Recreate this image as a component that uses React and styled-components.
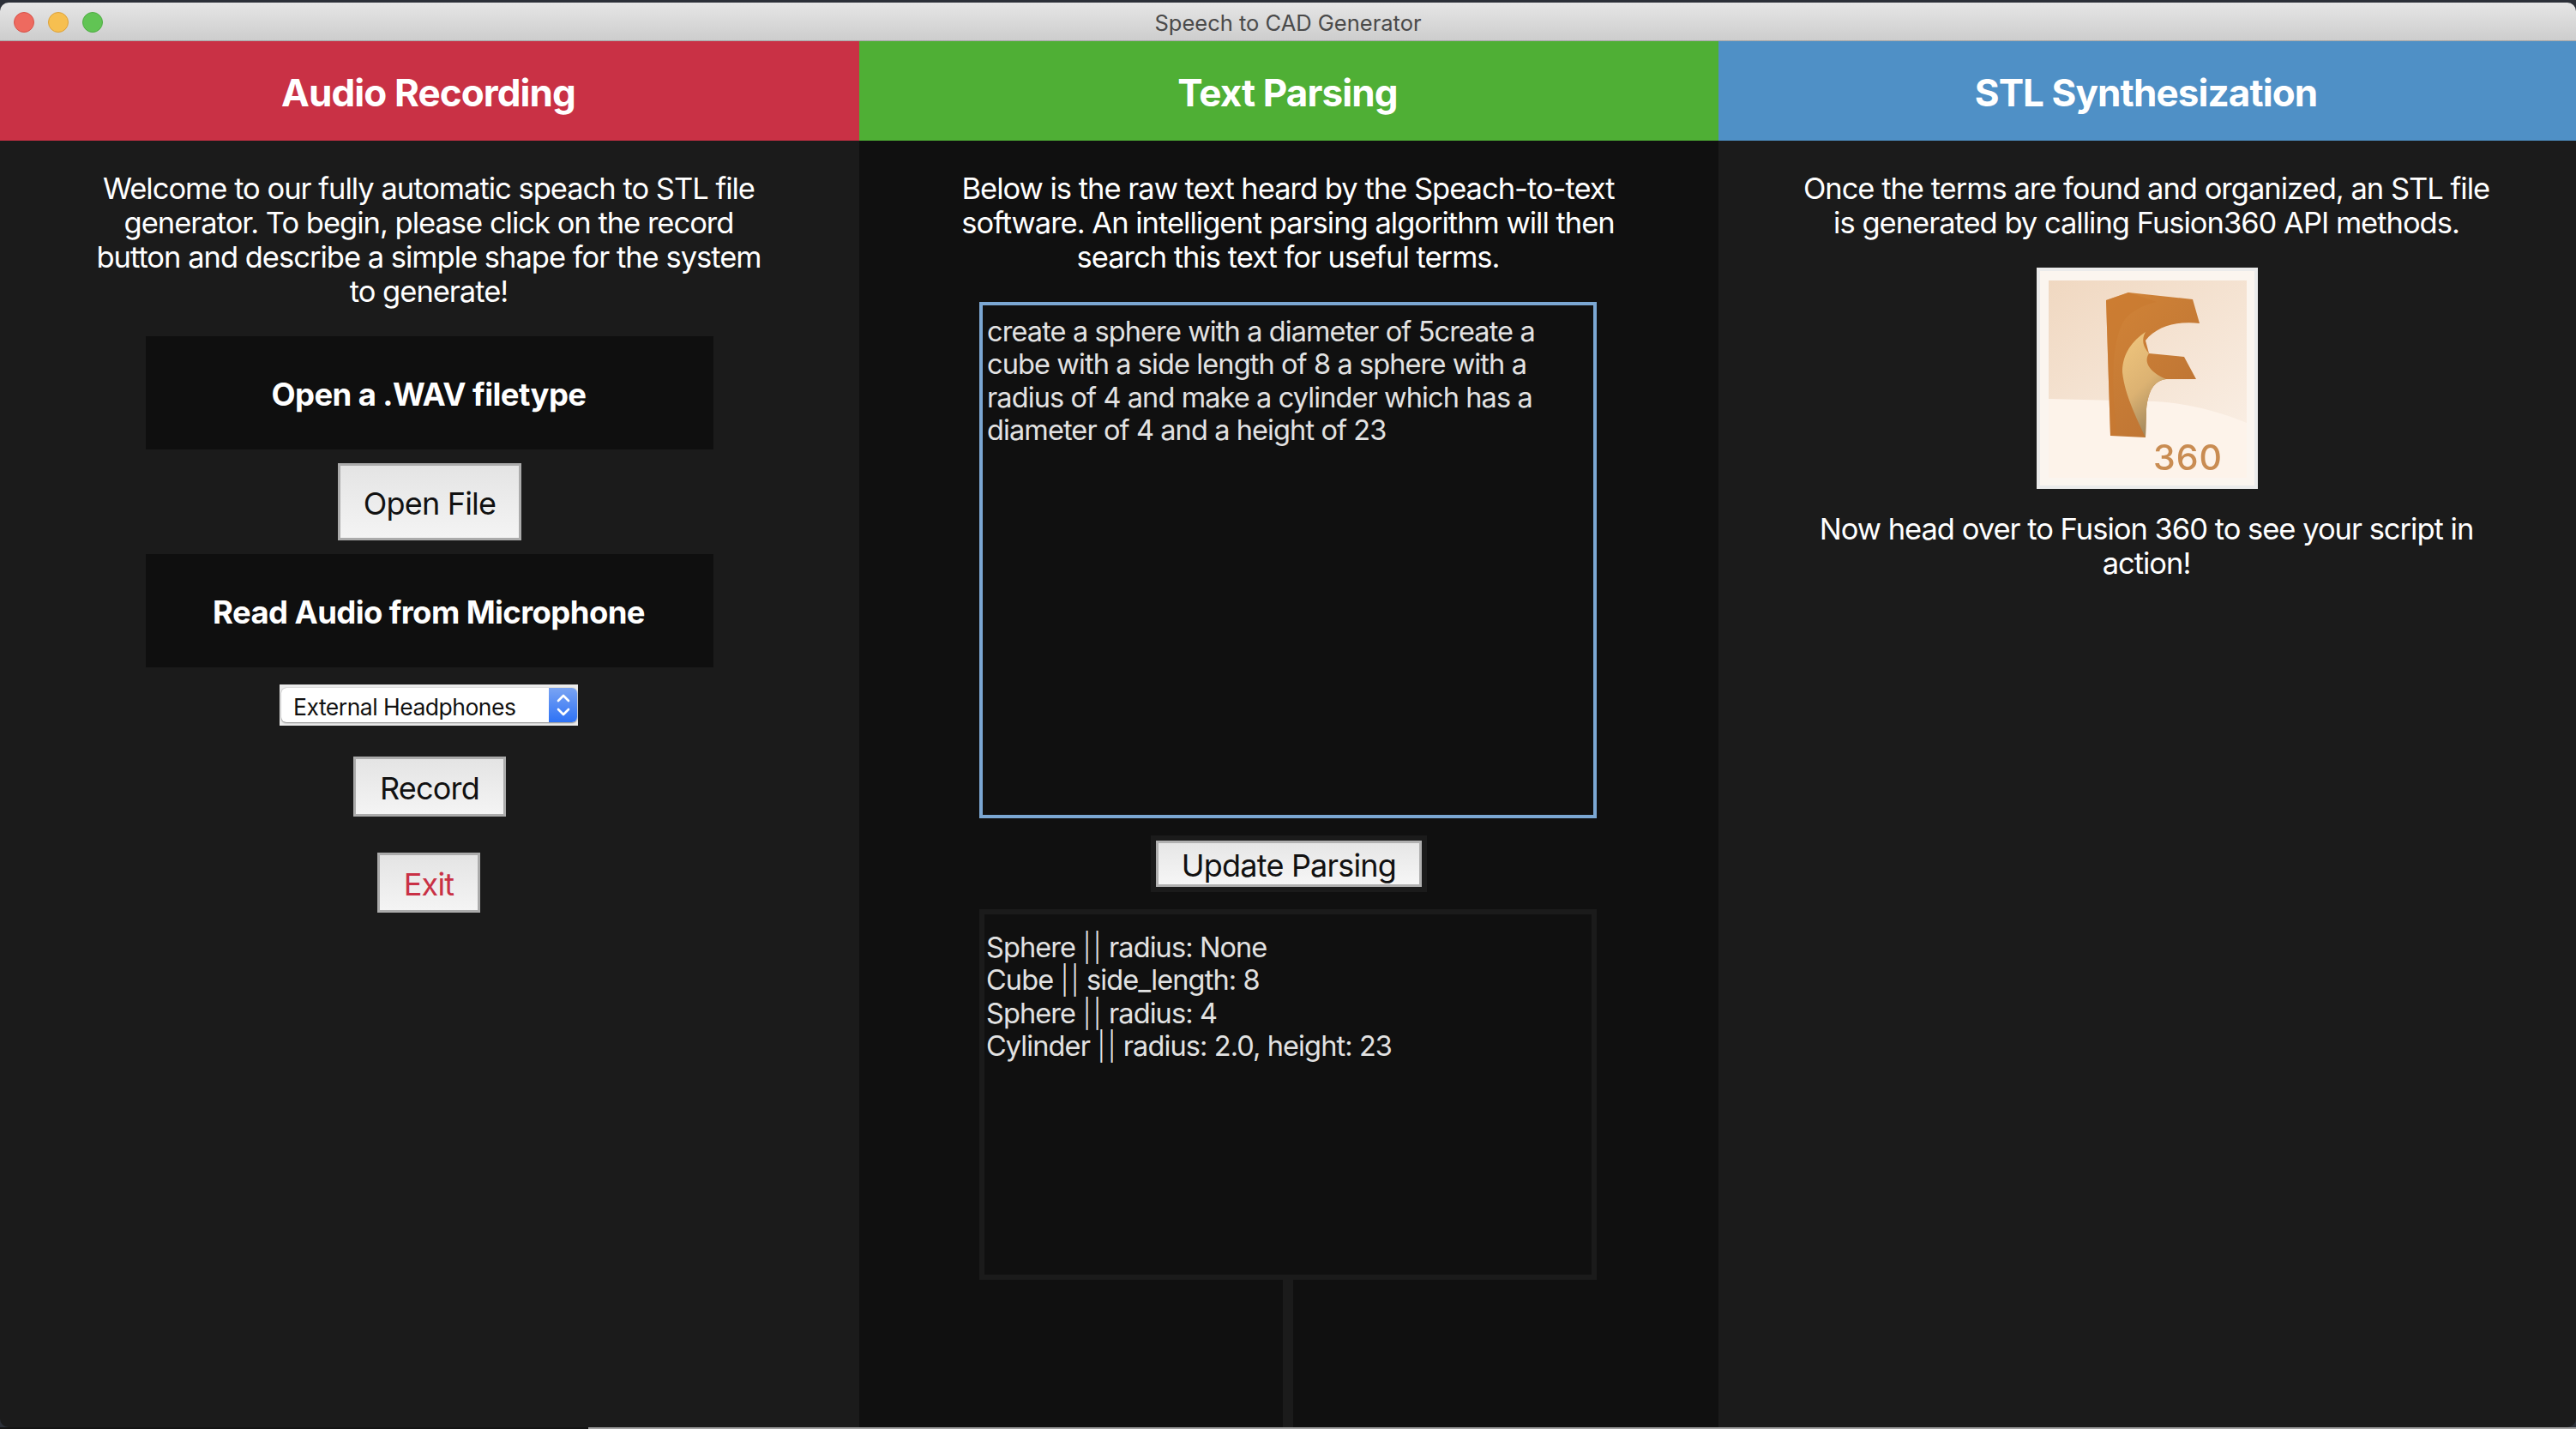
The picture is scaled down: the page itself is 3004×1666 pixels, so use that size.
import React from 'react'
import styled, { createGlobalStyle } from 'styled-components'

const Global = createGlobalStyle`
  html, body {
    margin: 0;
    padding: 0;
    background: #2c3038;
    overflow: hidden;
  }
  * { box-sizing: border-box; }
`

const Page = styled.div`
  width: 3004px;
  height: 1666px;
  padding-top: 3px;
  display: flex;
  flex-direction: column;
  background: #2c3038;
  font-family: Inter, "Liberation Sans", sans-serif;
  font-feature-settings: "calt" 0, "liga" 0;
  color: #fff;
  overflow: hidden;
`

const TitleBar = styled.div`
  position: relative;
  height: 45px;
  flex: none;
  padding-top: 2px;
  display: flex;
  align-items: center;
  justify-content: center;
  border-radius: 10px 10px 0 0;
  border-bottom: 1px solid #a8a8a8;
  background: linear-gradient(#e6e6e6, #cdcdcd);
  color: #4a4a4a;
  font-size: 25.5px;
`

const Lights = styled.div`
  position: absolute;
  left: 16px;
  top: 11px;
  display: flex;
  gap: 16px;
`

const Light = styled.span`
  width: 24px;
  height: 24px;
  border-radius: 50%;
  background: ${p => p.$color};
  border: 1px solid ${p => p.$edge};
`

const Columns = styled.div`
  flex: 1;
  display: grid;
  grid-template-columns: 1002px 1002px 1000px;
  min-height: 0;
  border-radius: 0 0 10px 10px;
  overflow: hidden;
`

const Column = styled.section`
  display: flex;
  flex-direction: column;
  align-items: center;
  background: ${p => p.$bg};
  min-height: 0;
`

const Header = styled.h1`
  align-self: stretch;
  height: 116px;
  margin: 0;
  padding: 3px 3px 0 0;
  flex: none;
  display: flex;
  align-items: center;
  justify-content: center;
  background: ${p => p.$color};
  font-size: 44px;
  font-weight: 700;
  letter-spacing: -0.9px;
`

const Intro = styled.p`
  width: 812px;
  margin: 36px 2px 0 0;
  text-align: center;
  font-size: 34.5px;
  line-height: 40px;
  letter-spacing: -1px;
  color: #fff;
`

const SectionBox = styled.div`
  width: 662px;
  height: 132px;
  margin-top: ${p => p.$top}px;
  padding: 3px 2px 0 0;
  display: flex;
  align-items: center;
  justify-content: center;
  background: #0f0f0f;
  font-size: 36.5px;
  font-weight: 700;
  letter-spacing: -0.6px;
`

const Button = styled.button`
  width: ${p => p.$w}px;
  height: ${p => p.$h}px;
  margin: ${p => p.$top}px ${p => p.$nudge || 0}px 0 0;
  padding: 3px 0 0;
  border: 3px solid #ababab;
  background: linear-gradient(#e4e4e4, #f4f4f4);
  color: ${p => p.$color || '#111'};
  font-family: inherit;
  font-feature-settings: inherit;
  font-size: 36px;
  letter-spacing: -0.8px;
`

const SelectFrame = styled.div`
  width: 348px;
  height: 48px;
  margin: 20px 2px 0 0;
  padding: 4px 1px 4px 2px;
  background: #ececec;
`

const Select = styled.div`
  height: 40px;
  display: flex;
  align-items: center;
  justify-content: space-between;
  padding-left: 14px;
  background: #fff;
  border-radius: 6px;
  box-shadow: 0 1px 2px #8a8a8a, 0 0 1px #9a9a9a;
  color: #111;
  font-size: 26.5px;
  letter-spacing: -0.5px;
  overflow: hidden;
`

const SelectLabel = styled.span`
  padding-top: 3px;
`

const Stepper = styled.span`
  width: 33px;
  height: 100%;
  display: flex;
  align-items: center;
  justify-content: center;
  background: linear-gradient(#7aa4f3, #2e72f5);
`

const EditBox = styled.div`
  width: 720px;
  height: ${p => p.$h}px;
  margin: ${p => p.$top}px 2px 0 0;
  padding: ${p => p.$pad}px 0 0 ${p => p.$inset}px;
  border: ${p => p.$border};
  font-size: 32.5px;
  line-height: 38.3px;
  letter-spacing: -0.9px;
  color: #e2e2e2;
  white-space: pre-line;
  flex: none;
`

const Bars = styled.span`
  font-weight: 300;
  letter-spacing: 2px;
  margin-right: -2px;
`

const UpdateFrame = styled.div`
  width: 322px;
  height: 66px;
  margin-top: 20px;
  padding: 6px;
  background: #1b1b1b;
  flex: none;
`

const UpdateButton = styled.button`
  width: 100%;
  height: 100%;
  padding: 3px 0 0;
  border: 3px solid #b0b0b0;
  background: linear-gradient(#e6e6e6, #f6f6f6);
  color: #111;
  font-family: inherit;
  font-feature-settings: inherit;
  font-size: 36px;
  letter-spacing: -0.8px;
`

const Stem = styled.div`
  width: 12px;
  flex: 1;
  margin-right: 2px;
  background: #1b1b1b;
`

const Logo = styled.svg`
  width: 258px;
  height: 258px;
  margin-top: 32px;
  flex: none;
`

const LogoArt = styled.g`
  filter: blur(0.7px);
`

const Outro = styled(Intro)`
  margin-top: 27px;
`

const BottomEdge = styled.div`
  height: 2px;
  flex: none;
  background: linear-gradient(90deg, #141414 686px, #a3a3a3 686px);
`

function Fusion() {
  return (
    <Logo viewBox="0 0 258 258">
      <defs>
        <linearGradient id="wall" x1="0" y1="0" x2="1" y2="1">
          <stop offset="0" stopColor="#f0d8c1" />
          <stop offset="1" stopColor="#f9ede2" />
        </linearGradient>
        <linearGradient id="body" x1="0" y1="0" x2="0.7" y2="1">
          <stop offset="0" stopColor="#d28437" />
          <stop offset="1" stopColor="#bd7434" />
        </linearGradient>
        <linearGradient id="fold" x1="0" y1="0" x2="0.4" y2="1">
          <stop offset="0" stopColor="#f1c77e" />
          <stop offset="0.6" stopColor="#dcb272" />
          <stop offset="1" stopColor="#a58a5e" />
        </linearGradient>
      </defs>
      <rect width="258" height="258" fill="#ebebeb" />
      <rect x="4" y="4" width="250" height="250" fill="#fbf5ef" />
      <LogoArt>
        <rect x="14" y="15" width="231" height="230" fill="#fdf3ea" />
        <path d="M14 15H245V181C210 167 175 158 137 156L14 153Z" fill="url(#wall)" />
        <path d="M81 38L107 29L182 37L190 65C165 62 140 68 127 85L131 100L172 104L186 130H151C136 132 130 145 128 165L127 198L86 196Z" fill="url(#body)" />
        <path d="M127 75C112 85 100 100 100 122C103 150 118 178 127 198L128 165C130 145 136 132 151 130C136 124 123 112 131 100C124 92 122 84 127 75Z" fill="url(#fold)" />
        <path d="M81 38L86 196H94C88 150 85 95 100 65C105 55 118 45 140 40L107 29Z" fill="#c9792f" opacity="0.55" />
        <text x="136" y="236" fontFamily="Inter, sans-serif" fontSize="41" fontWeight="500" fill="#c98c52" letterSpacing="1">360</text>
      </LogoArt>
    </Logo>
  )
}

export default function App() {
  return (
    <Page>
      <Global />
      <TitleBar>
        <Lights>
          <Light $color="#ee6a5f" $edge="#d8534a" />
          <Light $color="#f6bf50" $edge="#dea23a" />
          <Light $color="#61c454" $edge="#4fad43" />
        </Lights>
        Speech to CAD Generator
      </TitleBar>
      <Columns>
        <Column $bg="#1b1b1b">
          <Header $color="#c93145">Audio Recording</Header>
          <Intro>
            Welcome to our fully automatic speach to STL file generator. To begin, please click on the record button and describe a simple shape for the system to generate!
          </Intro>
          <SectionBox $top={32}>Open a .WAV filetype</SectionBox>
          <Button $w={214} $h={90} $top={16}>Open File</Button>
          <SectionBox $top={16}>Read Audio from Microphone</SectionBox>
          <SelectFrame>
            <Select>
              <SelectLabel>External Headphones</SelectLabel>
              <Stepper>
                <svg width="20" height="32" viewBox="0 0 20 32" fill="none" stroke="#fff" strokeWidth="2.6" strokeLinecap="round" strokeLinejoin="round">
                  <path d="M4 11L10 5L16 11" />
                  <path d="M4 21L10 27L16 21" />
                </svg>
              </Stepper>
            </Select>
          </SelectFrame>
          <Button $w={178} $h={70} $top={36}>Record</Button>
          <Button $w={120} $h={70} $top={42} $nudge={2} $color="#c93145">Exit</Button>
        </Column>
        <Column $bg="#101010">
          <Header $color="#4faf35">Text Parsing</Header>
          <Intro>
            Below is the raw text heard by the Speach-to-text software. An intelligent parsing algorithm will then search this text for useful terms.
          </Intro>
          <EditBox $h={602} $top={32} $pad={12} $inset={5} $border="4px solid #7ba7d3">
            create a sphere with a diameter of 5create a{'\n'}cube with a side length of 8 a sphere with a{'\n'}radius of 4 and make a cylinder which has a{'\n'}diameter of 4 and a height of 23
          </EditBox>
          <UpdateFrame><UpdateButton>Update Parsing</UpdateButton></UpdateFrame>
          <EditBox $h={432} $top={20} $pad={20} $inset={2} $border="6px solid #1b1b1b">
            Sphere <Bars>||</Bars> radius: None{'\n'}Cube <Bars>||</Bars> side_length: 8{'\n'}Sphere <Bars>||</Bars> radius: 4{'\n'}Cylinder <Bars>||</Bars> radius: 2.0, height: 23
          </EditBox>
          <Stem />
        </Column>
        <Column $bg="#1b1b1b">
          <Header $color="#4f90c6">STL Synthesization</Header>
          <Intro>
            Once the terms are found and organized, an STL file is generated by calling Fusion360 API methods.
          </Intro>
          <Fusion />
          <Outro>
            Now head over to Fusion 360 to see your script in action!
          </Outro>
        </Column>
      </Columns>
      <BottomEdge />
    </Page>
  )
}
